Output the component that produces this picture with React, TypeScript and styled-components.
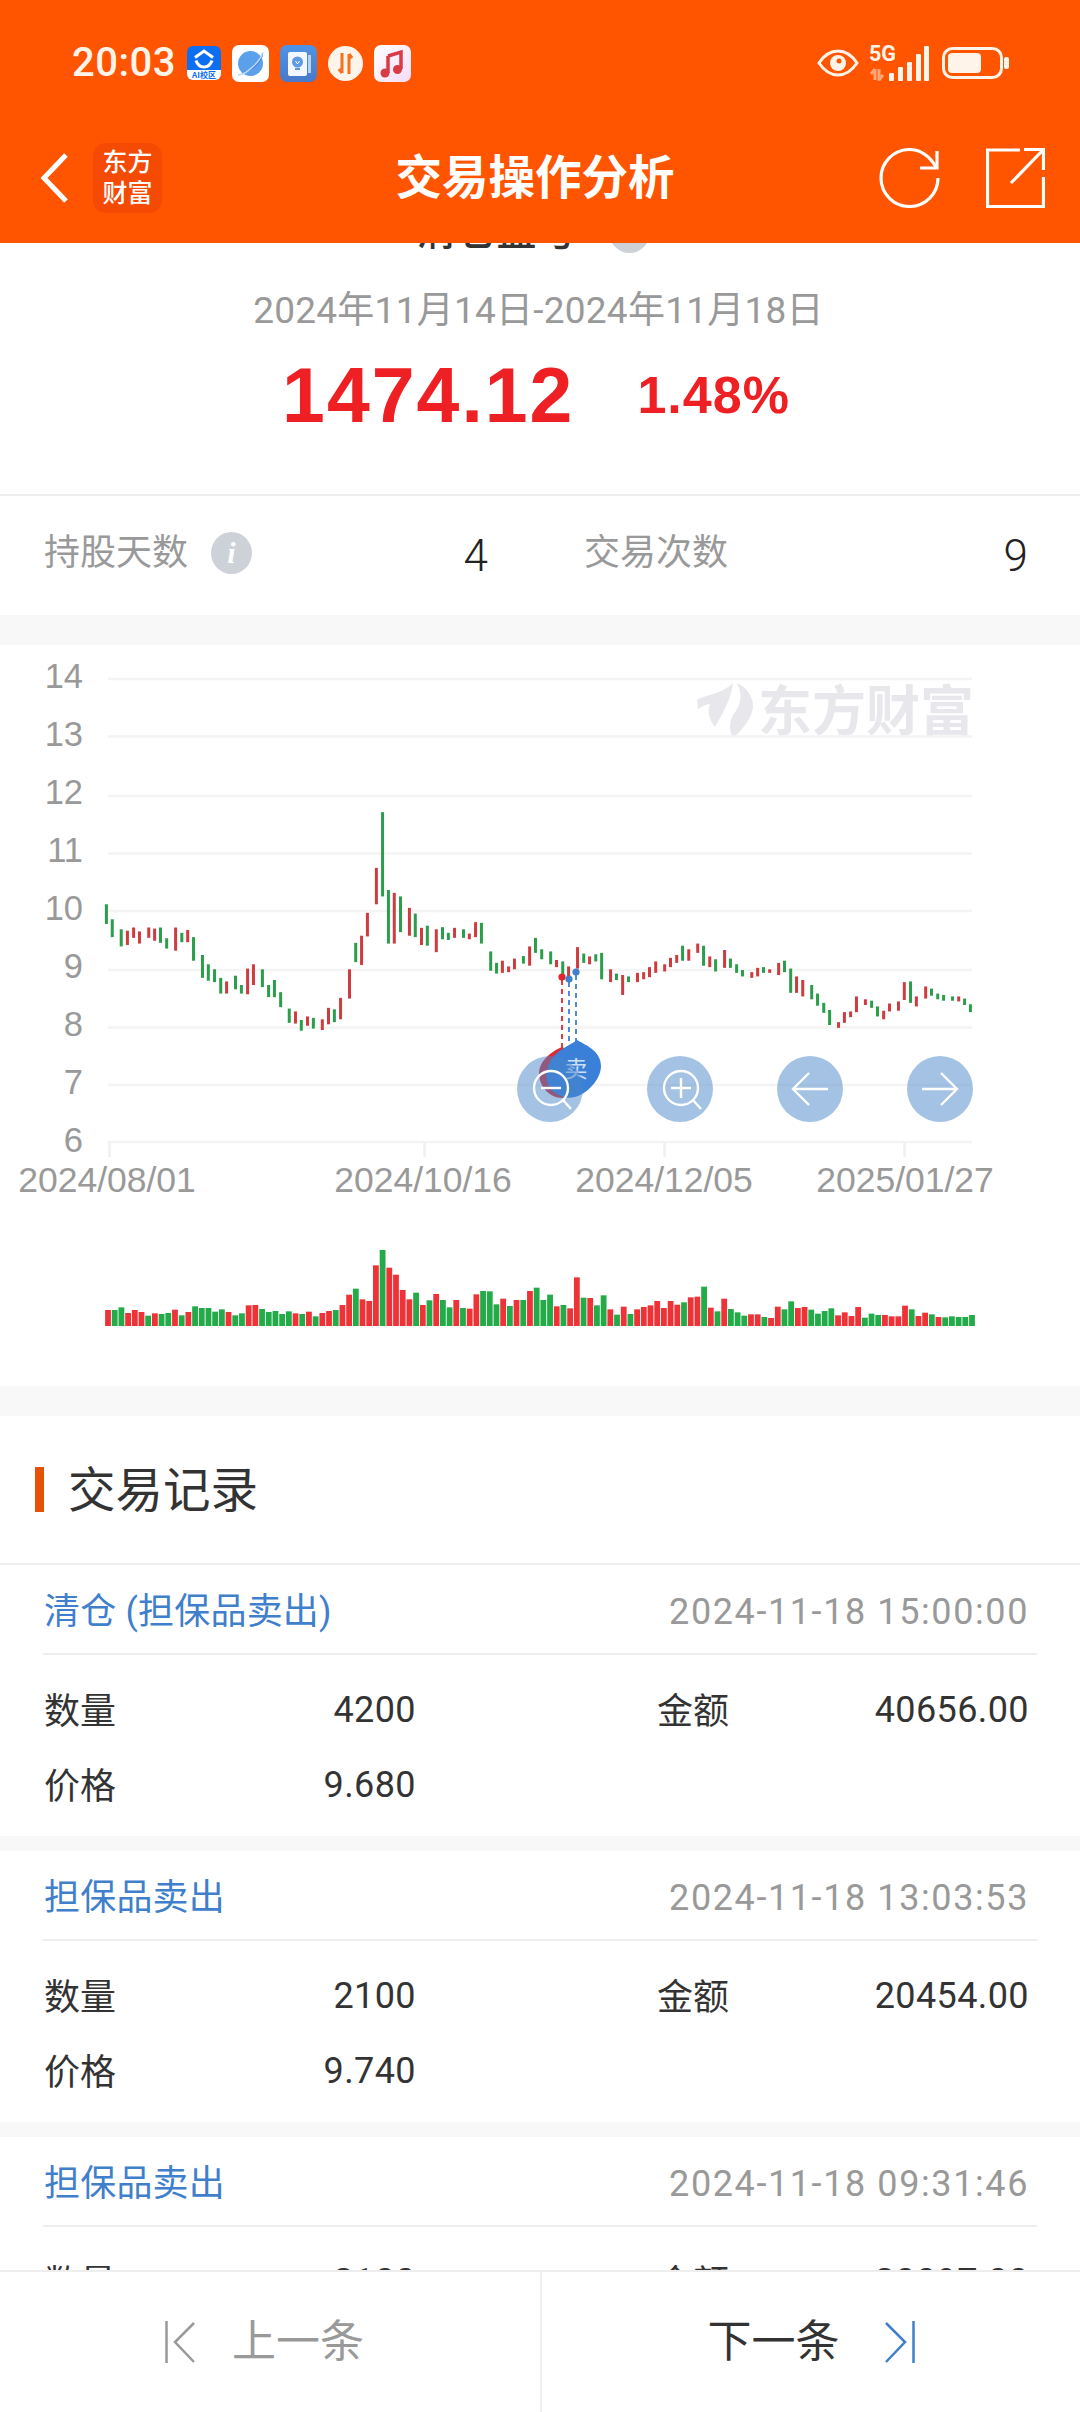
import React from "react";
import styled, { createGlobalStyle } from "styled-components";

const GlobalStyle = createGlobalStyle`
  html, body { margin: 0; padding: 0; background: #fff; }
  * { box-sizing: border-box; }
`;

const sans = `Roboto, "Noto Sans CJK SC", sans-serif`;

const Page = styled.div`
  width: 1080px;
  height: 2412px;
  display: flex;
  flex-direction: column;
  overflow: hidden;
  background: #fff;
  font-family: ${sans};
  color: #333;
`;

const Header = styled.header`
  position: relative;
  z-index: 2;
  flex: none;
  height: 243px;
  background: #ff5500;
  color: #fff;
`;

const StatusBar = styled.div`
  height: 126px;
  display: flex;
  align-items: center;
  justify-content: space-between;
  padding: 0 71px 0 72px;
`;

const StatusGroup = styled.div`
  display: flex;
  align-items: center;
  gap: 11px;
`;

const Clock = styled.span`
  font-size: 40px;
  font-weight: 500;
  line-height: 46px;
  letter-spacing: 0.5px;
  color: #fff4ea;
`;

const StatusRight = styled.div`
  display: flex;
  align-items: center;
`;

const NavBar = styled.nav`
  height: 117px;
  padding: 0 35px 13px 25px;
  display: grid;
  grid-template-columns: 1fr auto 1fr;
  align-items: center;
`;

const NavLeft = styled.div`
  display: flex;
  align-items: center;
  padding-left: 15px;
  gap: 24px;
`;

const NavRight = styled.div`
  display: flex;
  align-items: center;
  justify-content: flex-end;
  gap: 46px;
`;

const BrandMark = styled.div`
  width: 69px;
  height: 70px;
  border-radius: 13px;
  background: #f54a04;
  display: flex;
  flex-direction: column;
  align-items: center;
  justify-content: center;
  font-size: 25px;
  font-weight: 500;
  line-height: 31px;
`;

const NavTitle = styled.h1`
  margin: 0;
  font-size: 46.5px;
  font-weight: 700;
  line-height: 60px;
`;

const Content = styled.main`
  flex: 1;
  min-height: 0;
  overflow: hidden;
`;

const Summary = styled.section`
  margin-top: -36px;
  padding-bottom: 59px;
  display: flex;
  flex-direction: column;
  align-items: center;
`;

const SummaryTitle = styled.div`
  height: 50px;
  display: flex;
  align-items: center;
  gap: 32px;
  padding-right: 14px;
  font-size: 40px;
  font-weight: 500;
  line-height: 50px;
`;

const InfoBadge = styled.span`
  flex: none;
  width: 41px;
  height: 42px;
  border-radius: 50%;
  background: #cdd1d8;
  color: #fff;
  display: inline-flex;
  align-items: center;
  justify-content: center;
  font: italic 700 30px "Liberation Serif", serif;
`;

const DateRange = styled.div`
  margin-top: 32px;
  padding-right: 3px;
  font-size: 37px;
  letter-spacing: 0.25px;
  line-height: 44px;
  color: #999;
`;

const Figures = styled.div`
  margin-top: 22px;
  height: 80px;
  display: flex;
  align-items: baseline;
  gap: 63px;
  padding-right: 8px;
  color: #ee2024;
  font-family: "Liberation Sans", sans-serif;
  font-weight: 700;
`;

const Amount = styled.span`
  font-size: 77px;
  letter-spacing: 2px;
  line-height: 80px;
`;

const Percent = styled.span`
  position: relative;
  top: -9px;
  font-size: 52px;
  letter-spacing: 1px;
  line-height: 52px;
`;

const Stats = styled.section`
  height: 121px;
  border-top: 2px solid #eee;
  padding: 0 52px 6px 44px;
  display: grid;
  grid-template-columns: 1fr 1fr;
  column-gap: 96px;
  align-items: center;
`;

const Stat = styled.div`
  display: flex;
  align-items: center;
  justify-content: space-between;
`;

const StatLabel = styled.span`
  display: flex;
  align-items: center;
  gap: 23px;
  font-size: 36px;
  line-height: 44px;
  color: #999;
`;

const StatValue = styled.span`
  font-size: 44px;
  font-weight: 300;
  line-height: 44px;
  color: #222;
  position: relative;
  top: 3px;
`;

const Band = styled.div<{ $size: number }>`
  height: ${(p) => p.$size}px;
  background: #f8f8f8;
`;

const ChartPanel = styled.section`
  position: relative;
  height: 741px;
`;

const ChartDrawing = styled.svg`
  display: block;
  width: 1080px;
  height: 741px;
`;

const ChartTools = styled.div`
  position: absolute;
  left: 517px;
  top: 411px;
  display: flex;
  gap: 64px;
`;

const ToolButton = styled.button`
  width: 66px;
  height: 66px;
  padding: 0;
  border: 0;
  border-radius: 50%;
  background: rgba(73, 133, 201, 0.5);
  display: flex;
  align-items: center;
  justify-content: center;
`;

const RecordsHeader = styled.div`
  height: 149px;
  padding: 2px 0 0 35px;
  display: flex;
  align-items: center;
  gap: 24px;
  border-bottom: 2px solid #eee;
`;

const AccentBar = styled.span`
  width: 9px;
  height: 45px;
  margin-top: -2px;
  background: #e35205;
`;

const RecordsTitle = styled.h2`
  margin: 0;
  font-size: 47.5px;
  font-weight: 400;
  line-height: 60px;
  color: #333;
`;

const Record = styled.article`
  height: 271px;
  padding: 0 43px;
`;

const RecordHead = styled.div`
  height: 90px;
  padding: 5px 8px 0 1px;
  display: flex;
  align-items: center;
  justify-content: space-between;
  border-bottom: 2px solid #eee;
`;

const RecordType = styled.span`
  font-size: 36px;
  letter-spacing: 0.2px;
  line-height: 44px;
  color: #3f7fcc;
`;

const RecordTime = styled.span`
  font-size: 36px;
  letter-spacing: 1.6px;
  line-height: 44px;
  color: #999;
`;

const RecordBody = styled.div`
  padding: 17px 8px 0 1px;
  display: grid;
  grid-template-columns: 372px 372px;
  justify-content: space-between;
  grid-auto-rows: 75px;
`;

const Field = styled.div`
  display: flex;
  align-items: center;
  justify-content: space-between;
  font-size: 36px;
  color: #333;
`;

const FieldLabel = styled.span`
  margin-bottom: 4px;
`;

const FieldValue = styled.span`
  letter-spacing: 0.4px;
`;

const Footer = styled.footer`
  position: relative;
  z-index: 2;
  flex: none;
  height: 142px;
  background: #fff;
  border-top: 2px solid #eee;
  display: grid;
  grid-template-columns: 540px 1fr;
`;

const FooterButton = styled.div<{ $on?: boolean }>`
  display: flex;
  align-items: center;
  justify-content: center;
  gap: ${(p) => (p.$on ? 45 : 37)}px;
  padding: ${(p) => (p.$on ? "0" : "0 11px 0 0")};
  font-size: 44px;
  line-height: 60px;
  color: ${(p) => (p.$on ? "#333" : "#999")};
  border-left: ${(p) => (p.$on ? "2px solid #eee" : "0")};
`;

/* ---------- chart data, in reference crop units ---------- */
const candlesA: [number, number, number, number][] = [
  [309,740,795,0],[326,782,832,0],[352,810,858,0],[370,814,854,1],[388,805,834,1],[405,816,850,1],[432,805,834,1],[449,808,842,1],[466,805,848,0],[484,835,864,0],
  [510,805,870,1],[528,820,846,0],[545,812,846,1],[562,832,898,0],[588,882,946,0],[605,908,954,0],[623,922,958,0],[641,946,990,0],[658,956,990,1],[684,940,978,0],
  [701,966,990,0],[719,920,992,1],[736,908,966,1],[762,922,972,0],[780,966,1000,0],[797,952,1000,0],[815,986,1028,0],[840,1032,1072,0],[858,1040,1074,1],[875,1064,1094,0],
  [893,1054,1080,1],[910,1058,1088,0],[936,1062,1092,1],[954,1030,1076,1],[971,1034,1070,0],[989,1002,1062,1],[1015,922,1004,1],[1033,848,902,0],[1050,828,910,1],[1067,764,830,1],
  [1093,638,740,1],[1111,482,718,0],[1128,700,850,0],[1145,708,850,1],[1163,718,818,0],[1189,750,828,1],[1206,766,832,0],[1224,806,854,1],[1241,800,856,0],[1267,810,874,1],
  [1285,804,838,0],[1302,820,840,0],[1320,806,834,1],[1346,810,834,0],[1363,822,838,1],[1381,790,832,1],[1398,792,850,0],[1425,872,926,0],[1442,904,934,0],[1459,898,932,1],
  [1477,914,930,1],[1494,892,922,1],[1520,885,906,0],[1538,858,912,1],[1555,834,876,0],
];
const candlesB: [number, number, number, number][] = [
  [5,866,894,0],[31,872,908,0],[48,896,916,1],[66,900,940,0],[83,914,950,1],[109,860,920,1],[127,878,904,0],[144,886,908,1],[162,880,900,0],[179,876,950,0],
  [205,922,958,1],[222,934,952,0],[240,938,994,1],[257,942,958,0],[283,932,958,1],[301,930,950,1],[318,916,944,1],[336,900,932,1],[362,908,928,1],[379,890,916,1],
  [397,882,904,1],[414,856,898,0],[432,866,898,1],[458,850,876,1],[475,856,912,0],[493,886,916,1],[510,894,928,0],[536,868,918,1],[553,892,918,0],[571,908,932,0],
  [588,924,942,0],[615,930,946,1],[632,918,942,1],[649,916,932,0],[667,922,932,1],[693,904,938,1],[710,898,930,0],[728,920,988,0],[745,942,988,1],[763,952,998,1],
  [789,966,1006,0],[806,990,1024,0],[824,1016,1044,0],[841,1036,1078,0],[867,1070,1086,1],[884,1042,1072,1],[902,1040,1056,1],[919,998,1042,1],[945,1006,1022,1],[963,1010,1030,0],
  [980,1026,1054,0],[998,1038,1062,1],[1015,1018,1040,1],[1041,1012,1038,1],[1058,958,1008,1],[1076,956,1016,0],[1093,998,1026,1],[1120,970,1004,1],[1137,976,996,0],[1155,990,1006,0],
  [1172,994,1010,0],[1198,998,1010,0],[1216,998,1012,1],[1233,1004,1022,0],[1250,1020,1042,0],
];
const volumes: [number, number][] = [
  [330,1],[330,0],[322,0],[339,1],[330,1],[336,1],[347,0],[340,1],[342,0],[339,0],[329,1],[346,0],[336,1],[319,0],[324,0],[324,0],[335,0],[328,0],[336,1],[346,0],
  [340,0],[316,1],[315,1],[327,0],[336,0],[333,0],[342,0],[334,0],[340,1],[342,0],[335,1],[349,0],[339,1],[333,1],[330,0],[315,1],[284,1],[266,0],[298,1],[303,1],
  [196,1],[150,0],[203,1],[224,1],[270,1],[298,1],[278,0],[315,1],[301,0],[282,1],[300,0],[322,0],[300,1],[324,0],[326,1],[283,1],[273,0],[274,0],[313,0],[296,1],
  [318,0],[300,1],[300,0],[273,1],[263,0],[300,0],[284,0],[319,1],[315,0],[325,1],[232,1],[293,0],[294,1],[316,0],[286,0],[328,1],[344,0],[320,1],[342,0],[328,1],
  [321,1],[316,1],[303,1],[324,1],[303,1],[314,1],[307,0],[292,1],[290,1],[260,0],[323,1],[334,0],[296,1],[327,0],[337,0],[347,0],[343,1],[343,1],[351,0],[354,1],
  [320,1],[328,0],[304,0],[324,1],[321,1],[329,0],[341,0],[333,0],[325,0],[346,1],[337,1],[348,1],[321,1],[353,0],[341,0],[345,0],[345,1],[349,1],[349,1],[317,1],
  [328,0],[348,1],[338,1],[343,0],[351,1],[352,0],[349,0],[351,0],[351,0],[345,0],
];

const priceLabels = ["14", "13", "12", "11", "10", "9", "8", "7", "6"];
const gridYs = [679, 736.5, 796, 853.5, 911, 970, 1027.5, 1085, 1142];
const dateLabels: [string, number, number][] = [
  ["2024/08/01", 107, 109.5],
  ["2024/10/16", 423, 424.5],
  ["2024/12/05", 664, 664.5],
  ["2025/01/27", 905, 904.5],
];

const PriceChart = () => (
  <ChartDrawing viewBox="0 645 1080 741" aria-hidden="true">
    <g fill="#e8e8ec">
      <path d="M697 700C705 695 722 694 733 683C731 700 723 712 715 727C709 720 707 710 710 704C705 704 700 708 698 709Z" />
      <path d="M737 683C752 690 755 705 752 712C749 722 740 732 733 738C729 730 729 722 733 715C741 705 743 695 737 683Z" />
      <text x="758" y="731" fontSize="54" fontWeight="700" fontFamily="'Noto Sans CJK SC', sans-serif">东方财富</text>
    </g>
    {gridYs.map((y) => (
      <rect key={y} x="108" y={y - 1.25} width="864" height="2.5" fill="#f4f4f4" />
    ))}
    {dateLabels.map(([label, cx, tx]) => (
      <g key={label}>
        <rect x={tx - 1.25} y="1142" width="2.5" height="15" fill="#f0f0f0" />
        <text x={cx} y="1192" textAnchor="middle" fontSize="35.5" fontFamily="'Liberation Sans', sans-serif" fill="#999">{label}</text>
      </g>
    ))}
    {priceLabels.map((label, i) => (
      <text key={label} x="83" y={688 + i * 58} textAnchor="end" fontSize="34.5" fontFamily="'Liberation Sans', sans-serif" fill="#999">{label}</text>
    ))}
    {candlesA.map(([x, t, b, up]) => (
      <rect key={`a${x}`} x={x / 2.904 - 1.5} y={640 + t / 2.8} width="3" height={(b - t) / 2.8} fill={up ? "#ce3c40" : "#2a9e4b"} />
    ))}
    {candlesB.map(([x, t, b, up]) => (
      <rect key={`b${x}`} x={540 + x / 2.904 - 1.5} y={640 + t / 2.8} width="3" height={(b - t) / 2.8} fill={up ? "#ce3c40" : "#2a9e4b"} />
    ))}
    {volumes.map(([t, up], i) => (
      <rect key={`v${i}`} x={108 + (i * 864) / (volumes.length - 1) - 2.9} y={1200 + t / 3} width="5.8" height={1326 - (1200 + t / 3)} fill={up ? "#ee3338" : "#22ab48"} />
    ))}
    <g strokeWidth="1.8" strokeDasharray="5 4" fill="none">
      <path d="M562 980V1048" stroke="#e0262c" />
      <path d="M569 982V1042" stroke="#3f7fcc" />
      <path d="M576 975V1042" stroke="#3f7fcc" />
    </g>
    <circle cx="562" cy="977" r="3.6" fill="#e0262c" />
    <circle cx="569" cy="979" r="3.6" fill="#3f7fcc" />
    <circle cx="576" cy="972" r="3.6" fill="#3f7fcc" />
    <path d="M562 1047C550 1052 539 1062 539 1073C539 1087 550 1098 562 1098C575 1098 586 1087 586 1073C586 1062 574 1052 562 1047Z" fill="#d92d33" />
    <path d="M577 1040C569 1046 556 1050 550 1062C544 1074 546 1086 554 1092C562 1098 570 1099 578 1096C590 1091 601 1078 601 1066C601 1052 588 1046 577 1040Z" fill="#3a80d8" />
    <text x="576" y="1077" textAnchor="middle" fontSize="23" fontFamily="'Noto Sans CJK SC', sans-serif" fill="#cfe0f6">卖</text>
  </ChartDrawing>
);

/* ---------- icons ---------- */
const AiIcon = () => (
  <svg width="34" height="37" viewBox="0 0 34 37">
    <rect y="1" width="34" height="34" rx="6" fill="#0c6ef0" />
    <path d="M0 25H34V29a6 6 0 0 1-6 6H6a6 6 0 0 1-6-6Z" fill="#fff" />
    <path d="M8 12.5L17 6l9 6.5" fill="none" stroke="#fff" strokeWidth="3" />
    <path d="M9 15.5c1.5 4.500 4.500 6.500 8 6.500s6.500-2 8-6.500" fill="none" stroke="#fff" strokeWidth="3" />
    <text x="17" y="33" textAnchor="middle" fontSize="8" fontWeight="700" fontFamily="'Noto Sans CJK SC', sans-serif" fill="#0c6ef0">AI校区</text>
  </svg>
);

const PlanetIcon = () => (
  <svg width="37" height="37" viewBox="0 0 37 37">
    <rect width="37" height="37" rx="7" fill="#fff" />
    <circle cx="18.500" cy="18.500" r="12.500" fill="#5ba0ea" />
    <path d="M9 27C18 27 29 17 30 8C35 8 22 30 9 27Z" fill="#2f74dc" />
    <path d="M6 30C13 30 28 18 31 7" fill="none" stroke="#bcd6f6" strokeWidth="1.500" />
  </svg>
);

const BulbBookIcon = () => (
  <svg width="37" height="37" viewBox="0 0 37 37">
    <defs>
      <linearGradient id="bookBg" x1="0" y1="0" x2="0" y2="1">
        <stop offset="0" stopColor="#4f94e6" />
        <stop offset="1" stopColor="#4a78c8" />
      </linearGradient>
    </defs>
    <rect width="37" height="37" rx="7" fill="url(#bookBg)" />
    <rect x="8" y="7" width="19" height="24" rx="2" fill="#f2f7fe" />
    <rect x="28" y="10" width="3" height="18" fill="#b7d3f4" />
    <circle cx="17.500" cy="17" r="5.500" fill="#5d9ae6" />
    <rect x="15" y="23" width="5" height="2" fill="#5d9ae6" />
    <path d="M15.500 16l2 3 2-3" fill="none" stroke="#fff" strokeWidth="1" />
  </svg>
);

const SwapIcon = () => (
  <svg width="35" height="35" viewBox="0 0 35 35">
    <circle cx="17.500" cy="17.500" r="17.500" fill="#fff4ea" />
    <path d="M14 7V27M14 27L11 23" fill="none" stroke="#f4711f" strokeWidth="3" />
    <path d="M21 28V8M21 8L24 12" fill="none" stroke="#f4711f" strokeWidth="3" />
  </svg>
);

const MusicIcon = () => (
  <svg width="37" height="37" viewBox="0 0 37 37">
    <defs>
      <linearGradient id="musicBg" x1="0" y1="0" x2="1" y2="1">
        <stop offset="0" stopColor="#fff" />
        <stop offset="1" stopColor="#f4dcf6" />
      </linearGradient>
    </defs>
    <rect width="37" height="37" rx="7" fill="url(#musicBg)" />
    <path d="M14 11L27 7V24" fill="none" stroke="#d83a46" strokeWidth="3.500" />
    <path d="M14 11V28" fill="none" stroke="#d83a46" strokeWidth="3.500" />
    <circle cx="11" cy="28" r="4.500" fill="#d83a46" />
    <circle cx="23.500" cy="24.500" r="4.500" fill="#d83a46" />
  </svg>
);

const EyeIcon = () => (
  <svg width="42" height="28" viewBox="0 0 42 28" style={{ marginRight: 10 }}>
    <path d="M2 14C8 5 14 2 21 2s13 3 19 12c-6 9-12 12-19 12S8 23 2 14Z" fill="none" stroke="#fff4ea" strokeWidth="3" />
    <circle cx="21" cy="14" r="8" fill="#fff4ea" />
    <circle cx="22" cy="12" r="2.500" fill="#ff5500" />
  </svg>
);

const SignalIcon = () => (
  <svg width="60" height="36" viewBox="0 0 60 36" style={{ marginRight: 13 }}>
    <text x="0" y="16" fontSize="21.5" fontWeight="700" fontFamily="Roboto, sans-serif" fill="#fff4ea">5G</text>
    <path d="M6 24v11M2 29l4-5 M10 24v11l4-5" fill="none" stroke="#ffa57a" strokeWidth="3" />
    <g fill="#fff4ea">
      <rect x="20" y="28" width="5" height="8" rx="1" />
      <rect x="29" y="22" width="5" height="14" rx="1" />
      <rect x="38" y="17" width="5" height="19" rx="1" />
      <rect x="47" y="9" width="5" height="27" rx="1" />
      <rect x="55" y="1" width="5" height="35" rx="1" />
    </g>
  </svg>
);

const BatteryIcon = () => (
  <svg width="67" height="32" viewBox="0 0 67 32">
    <rect x="1.500" y="1.500" width="58" height="29" rx="9" fill="none" stroke="#fff4ea" strokeWidth="3" />
    <rect x="6" y="6" width="33" height="20" rx="4" fill="#fff4ea" />
    <rect x="62" y="10" width="5" height="12" rx="2" fill="#fff4ea" />
  </svg>
);

const BackIcon = () => (
  <svg width="29" height="50" viewBox="0 0 29 50">
    <path d="M26 2L4 25l22 23" fill="none" stroke="#fff" strokeWidth="5" />
  </svg>
);

const RefreshIcon = () => (
  <svg width="61" height="60" viewBox="0 0 61 60">
    <path d="M59 30A28.500 28.500 0 1 1 30 1.500C42 1.500 51 9 57 19" fill="none" stroke="#fff" strokeWidth="3.200" />
    <path d="M58 3V20H41" fill="none" stroke="#fff" strokeWidth="3.200" />
  </svg>
);

const ShareIcon = () => (
  <svg width="59" height="60" viewBox="0 0 59 60">
    <path d="M34 2H1.500V58.500H57.500V29" fill="none" stroke="#fff" strokeWidth="3.200" />
    <path d="M25 35L57 2M38 1.500H57.500V22" fill="none" stroke="#fff" strokeWidth="3.200" />
  </svg>
);

const ZoomIcon = ({ plus }: { plus?: boolean }) => (
  <svg width="66" height="66" viewBox="0 0 66 66">
    <circle cx="34" cy="32" r="17" fill="none" stroke="#fff" strokeWidth="2.400" />
    <path d="M46 44L54 53" stroke="#fff" strokeWidth="2.400" />
    <path d={plus ? "M24 32H44M34 22V42" : "M24 32H44"} stroke="#fff" strokeWidth="2.400" />
  </svg>
);

const ArrowIcon = ({ right }: { right?: boolean }) => (
  <svg width="66" height="66" viewBox="0 0 66 66">
    <path d={right ? "M15 33H50M34 17L50 33L34 49" : "M51 33H16M32 17L16 33L32 49"} fill="none" stroke="#fff" strokeWidth="2.400" />
  </svg>
);

const FirstIcon = () => (
  <svg width="30" height="42" viewBox="0 0 30 42">
    <path d="M1.500 0V42" stroke="#999" strokeWidth="2.500" />
    <path d="M29 2L10 21l19 20" fill="none" stroke="#999" strokeWidth="2.500" />
  </svg>
);

const LastIcon = () => (
  <svg width="30" height="42" viewBox="0 0 30 42">
    <path d="M1 2L20 21L1 41" fill="none" stroke="#3f7fcc" strokeWidth="2.500" />
    <path d="M28.500 0V42" stroke="#3f7fcc" strokeWidth="2.500" />
  </svg>
);

/* ---------- records ---------- */
const records = [
  { type: "清仓 (担保品卖出)", time: "2024-11-18 15:00:00", qty: "4200", amount: "40656.00", price: "9.680" },
  { type: "担保品卖出", time: "2024-11-18 13:03:53", qty: "2100", amount: "20454.00", price: "9.740" },
  { type: "担保品卖出", time: "2024-11-18 09:31:46", qty: "2100", amount: "20097.00", price: "9.570" },
];

export default function App() {
  return (
    <Page>
      <GlobalStyle />
      <Header>
        <StatusBar>
          <StatusGroup>
            <Clock>20:03</Clock>
            <AiIcon />
            <PlanetIcon />
            <BulbBookIcon />
            <SwapIcon />
            <MusicIcon />
          </StatusGroup>
          <StatusRight>
            <EyeIcon />
            <SignalIcon />
            <BatteryIcon />
          </StatusRight>
        </StatusBar>
        <NavBar>
          <NavLeft>
            <BackIcon />
            <BrandMark>
              <span>东方</span>
              <span>财富</span>
            </BrandMark>
          </NavLeft>
          <NavTitle>交易操作分析</NavTitle>
          <NavRight>
            <RefreshIcon />
            <ShareIcon />
          </NavRight>
        </NavBar>
      </Header>

      <Content>
        <Summary>
          <SummaryTitle>
            清仓盈亏
            <InfoBadge>i</InfoBadge>
          </SummaryTitle>
          <DateRange>2024年11月14日-2024年11月18日</DateRange>
          <Figures>
            <Amount>1474.12</Amount>
            <Percent>1.48%</Percent>
          </Figures>
        </Summary>

        <Stats>
          <Stat>
            <StatLabel>
              持股天数
              <InfoBadge>i</InfoBadge>
            </StatLabel>
            <StatValue>4</StatValue>
          </Stat>
          <Stat>
            <StatLabel>交易次数</StatLabel>
            <StatValue>9</StatValue>
          </Stat>
        </Stats>

        <Band $size={30} />

        <ChartPanel>
          <PriceChart />
          <ChartTools>
            <ToolButton aria-label="缩小"><ZoomIcon /></ToolButton>
            <ToolButton aria-label="放大"><ZoomIcon plus /></ToolButton>
            <ToolButton aria-label="向左"><ArrowIcon /></ToolButton>
            <ToolButton aria-label="向右"><ArrowIcon right /></ToolButton>
          </ChartTools>
        </ChartPanel>

        <Band $size={30} />

        <RecordsHeader>
          <AccentBar />
          <RecordsTitle>交易记录</RecordsTitle>
        </RecordsHeader>

        {records.map((r, i) => (
          <React.Fragment key={r.time}>
            {i > 0 && <Band $size={15} />}
            <Record>
              <RecordHead>
                <RecordType>{r.type}</RecordType>
                <RecordTime>{r.time}</RecordTime>
              </RecordHead>
              <RecordBody>
                <Field><FieldLabel>数量</FieldLabel><FieldValue>{r.qty}</FieldValue></Field>
                <Field><FieldLabel>金额</FieldLabel><FieldValue>{r.amount}</FieldValue></Field>
                <Field><FieldLabel>价格</FieldLabel><FieldValue>{r.price}</FieldValue></Field>
              </RecordBody>
            </Record>
          </React.Fragment>
        ))}
      </Content>

      <Footer>
        <FooterButton>
          <FirstIcon />
          上一条
        </FooterButton>
        <FooterButton $on>
          下一条
          <LastIcon />
        </FooterButton>
      </Footer>
    </Page>
  );
}
